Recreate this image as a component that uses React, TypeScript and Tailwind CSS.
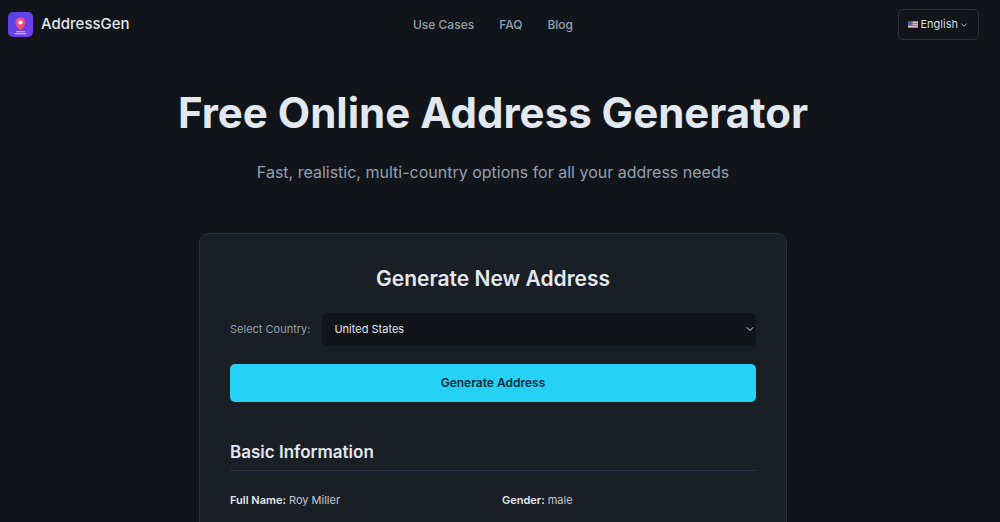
import { ChevronDown } from "lucide-react";

const navLinks = ["Use Cases", "FAQ", "Blog"];

const countries = ["United States", "Canada", "United Kingdom", "Germany"];

const basicInfo = [
  { label: "Full Name", value: "Roy Miller" },
  { label: "Gender", value: "male" },
];

function Logo() {
  return (
    <svg viewBox="0 0 50 50" className="size-[25px]" aria-hidden="true">
      <defs>
        <linearGradient id="logo-bg" x1="0" y1="0" x2="1" y2="1">
          <stop offset="0" stopColor="#4f46e5" />
          <stop offset="1" stopColor="#7c3aed" />
        </linearGradient>
        <linearGradient id="logo-pin" x1="0" y1="0" x2="1" y2="1">
          <stop offset="0" stopColor="#f0569a" />
          <stop offset="1" stopColor="#f04458" />
        </linearGradient>
      </defs>
      <rect width="50" height="50" rx="10" fill="url(#logo-bg)" />
      <path d="M25 11c-5.500 0-10 4.300-10 9.800C15 28 25 37 25 37s10-9 10-16.200C35 15.300 30.500 11 25 11z" fill="url(#logo-pin)" />
      <circle cx="25" cy="21" r="4.200" fill="#fff" />
      <path d="M17 39.500h16" stroke="#d6cffb" strokeWidth="2" strokeLinecap="round" />
      <path d="M14 43.500h22" stroke="#d6cffb" strokeWidth="2" strokeLinecap="round" />
    </svg>
  );
}

function UsFlag() {
  return (
    <svg viewBox="0 0 20 14" className="h-[7px] w-[10px]" aria-hidden="true">
      <rect width="20" height="14" rx="1" fill="#e3bcc2" />
      <path d="M0 1h20M0 5h20M0 9h20M0 13h20" stroke="#d9626e" strokeWidth="2" />
      <rect width="9" height="8" fill="#4a5a98" />
      <path d="M1.500 2h6M1.500 4h6M1.500 6h6" stroke="#7886bb" strokeWidth="0.800" strokeDasharray="1 1" />
    </svg>
  );
}

function Header() {
  return (
    <header className="grid grid-cols-[1fr_auto_1fr] items-center px-[7px] pt-[9px]">
      <a href="#" className="flex items-center gap-2 justify-self-start pl-px text-[15px] font-medium text-slate-200">
        <Logo />
        AddressGen
      </a>
      <nav className="flex gap-[25px] text-[12px] leading-5 font-medium text-[#94a0b3]">
        {navLinks.map((name) => (
          <a key={name} href="#">
            {name}
          </a>
        ))}
      </nav>
      <button
        type="button"
        className="flex h-[31px] items-center justify-self-end rounded-[5px] border border-[#2d3340] px-[9px] text-[11px] text-[#d5dae3]"
      >
        <UsFlag />
        <span className="ml-[3px]">English</span>
        <ChevronDown className="ml-px size-[10px]" />
      </button>
    </header>
  );
}

function GeneratorCard() {
  return (
    <section className="mx-auto mt-[47px] w-full max-w-[588px] rounded-[10px] border border-[#2d323e] bg-[#1a1e25] px-[30px] pt-[29px] pb-10">
      <h2 className="text-center text-[21px] leading-8 font-semibold text-slate-200">Generate New Address</h2>
      <div className="mt-[18px] flex items-center gap-3">
        <label htmlFor="country" className="text-[11px] text-[#94a0b3]">
          Select Country:
        </label>
        <div className="relative flex-1">
          <select
            id="country"
            defaultValue="United States"
            className="h-[33px] w-full appearance-none rounded-[5px] bg-[#111418] px-3 text-[11px] text-slate-200"
          >
            {countries.map((country) => (
              <option key={country}>{country}</option>
            ))}
          </select>
          <ChevronDown className="pointer-events-none absolute top-[10px] right-0 size-3 text-slate-200" />
        </div>
      </div>
      <button
        type="button"
        className="mt-[18px] h-[38px] w-full rounded-[5px] bg-[#25d1f4] text-xs font-semibold text-[#0f2a3a]"
      >
        Generate Address
      </button>
      <h3 className="mt-[38px] border-b border-[#2d323e] pb-[5px] text-[17px] leading-[25px] font-semibold text-slate-200">
        Basic Information
      </h3>
      <dl className="mt-5 grid grid-cols-2 gap-x-[18px] gap-y-3 text-[11px] leading-[18px]">
        {basicInfo.map(({ label, value }) => (
          <div key={label} className="flex gap-[3px]">
            <dt className="font-semibold text-slate-200">{label}:</dt>
            <dd className="text-[#c3c8d2]">{value}</dd>
          </div>
        ))}
      </dl>
    </section>
  );
}

export default function App() {
  return (
    <div className="h-screen overflow-hidden bg-[#111418] pr-[14px] font-['Inter',sans-serif]">
      <Header />
      <main className="px-4 pt-[45px] text-center">
        <h1 className="text-[42px] leading-[56px] font-bold text-slate-200">Free Online Address Generator</h1>
        <p className="mt-[17px] text-[16px] leading-7 text-[#94a0b3]">
          Fast, realistic, multi-country options for all your address needs
        </p>
        <div className="text-left">
          <GeneratorCard />
        </div>
      </main>
    </div>
  );
}
